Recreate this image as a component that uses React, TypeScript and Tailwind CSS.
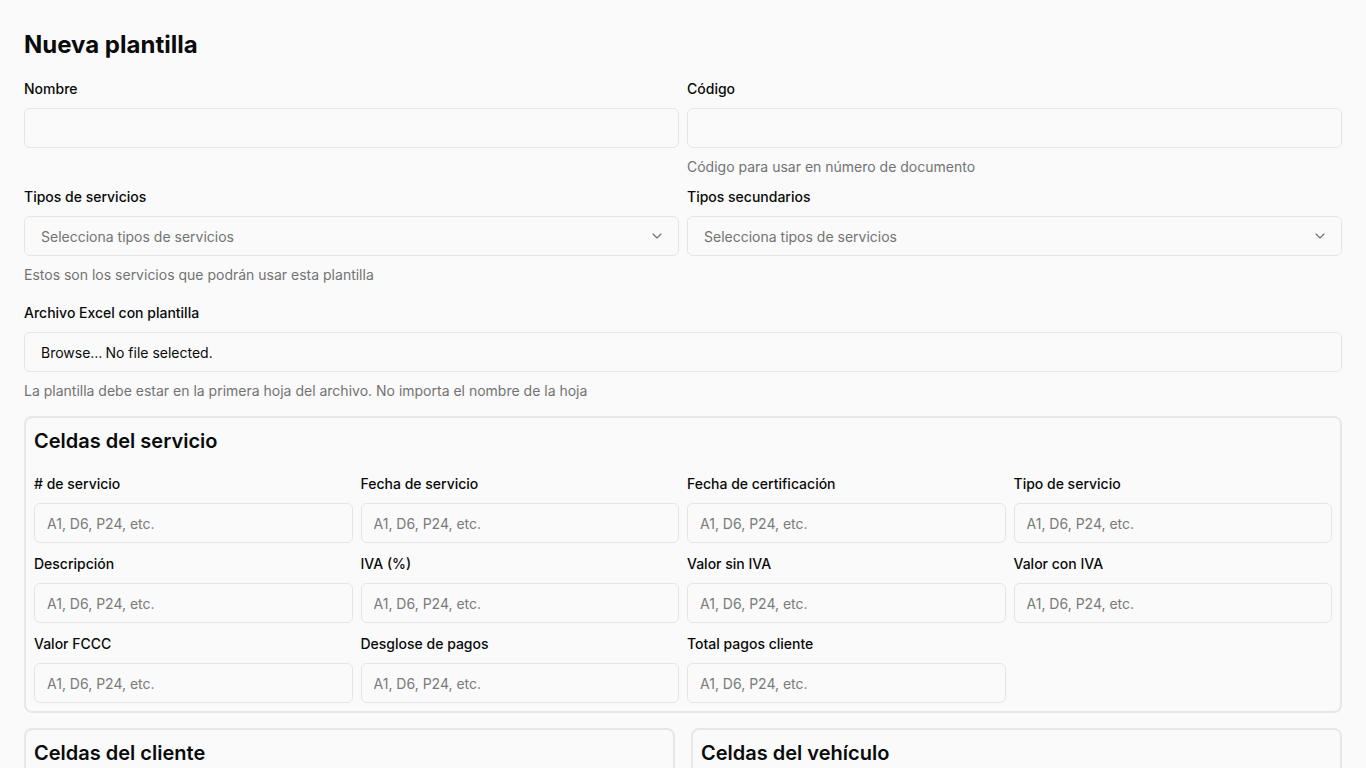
import { ChevronDown } from "lucide-react";

const serviceFields = [
  "# de servicio",
  "Fecha de servicio",
  "Fecha de certificación",
  "Tipo de servicio",
  "Descripción",
  "IVA (%)",
  "Valor sin IVA",
  "Valor con IVA",
  "Valor FCCC",
  "Desglose de pagos",
  "Total pagos cliente",
];

function Label({ children }: { children: React.ReactNode }) {
  return <label className="text-sm leading-5 font-medium text-[#0a0a0a]">{children}</label>;
}

function Help({ children }: { children: React.ReactNode }) {
  return <p className="text-sm leading-5 text-[#737373]">{children}</p>;
}

function TextInput({ placeholder }: { placeholder?: string }) {
  return (
    <input
      placeholder={placeholder}
      className="h-10 w-full rounded-md border border-[#e4e6e4] bg-[#f9faf9] px-3 text-sm text-[#0a0a0a] placeholder:text-[#7a7a7a] outline-none"
    />
  );
}

function SelectBox() {
  return (
    <button className="flex h-10 w-full items-center justify-between rounded-md border border-[#e4e6e4] bg-[#f9faf9] pl-4 pr-[13px] text-sm text-[#737373]">
      <span className="mt-[2px]">Selecciona tipos de servicios</span>
      <ChevronDown className="h-4 w-4 text-[#737373]" strokeWidth={1.75} />
    </button>
  );
}

function Card({ title, children }: { title: string; children?: React.ReactNode }) {
  return (
    <section className="rounded-lg border-2 border-[#e6e8e6] p-2">
      <h2 className="pt-px text-xl leading-7 font-semibold text-[#0a0a0a]">{title}</h2>
      {children}
    </section>
  );
}

export default function App() {
  return (
    <div
      className="min-h-screen bg-[#f9faf9] px-6 pt-[29px] pb-10 text-[#0a0a0a]"
      style={{ fontFamily: "Inter, 'Liberation Sans', sans-serif" }}
    >
      <h1 className="text-2xl leading-8 font-bold">Nueva plantilla</h1>

      <div className="mt-[18px] grid grid-cols-2 gap-x-2">
        <div className="flex flex-col gap-[9px]">
          <Label>Nombre</Label>
          <TextInput />
        </div>
        <div className="flex flex-col gap-[9px]">
          <Label>Código</Label>
          <TextInput />
          <Help>Código para usar en número de documento</Help>
        </div>
      </div>

      <div className="mt-[10px] grid grid-cols-2 gap-x-2">
        <div className="flex flex-col gap-[9px]">
          <Label>Tipos de servicios</Label>
          <SelectBox />
          <Help>Estos son los servicios que podrán usar esta plantilla</Help>
        </div>
        <div className="flex flex-col gap-[9px]">
          <Label>Tipos secundarios</Label>
          <SelectBox />
        </div>
      </div>

      <div className="mt-[18px] flex flex-col gap-[9px]">
        <Label>Archivo Excel con plantilla</Label>
        <div className="flex h-10 w-full items-center gap-[3px] rounded-md border border-[#e4e6e4] bg-[#f9faf9] px-4 pt-[2px] text-sm text-[#0a0a0a]">
          <span>Browse…</span>
          <span>No file selected.</span>
        </div>
        <Help>La plantilla debe estar en la primera hoja del archivo. No importa el nombre de la hoja</Help>
      </div>

      <div className="mt-[15px]">
        <Card title="Celdas del servicio">
          <div className="mt-[19px] grid grid-cols-4 gap-x-2 gap-y-[11px]">
            {serviceFields.map((f) => (
              <div key={f} className="flex flex-col gap-[9px]">
                <Label>{f}</Label>
                <TextInput placeholder="A1, D6, P24, etc." />
              </div>
            ))}
          </div>
        </Card>
      </div>

      <div className="mt-[15px] grid grid-cols-2 gap-4">
        <Card title="Celdas del cliente">
          <div className="h-40" />
        </Card>
        <Card title="Celdas del vehículo">
          <div className="h-40" />
        </Card>
      </div>
    </div>
  );
}
